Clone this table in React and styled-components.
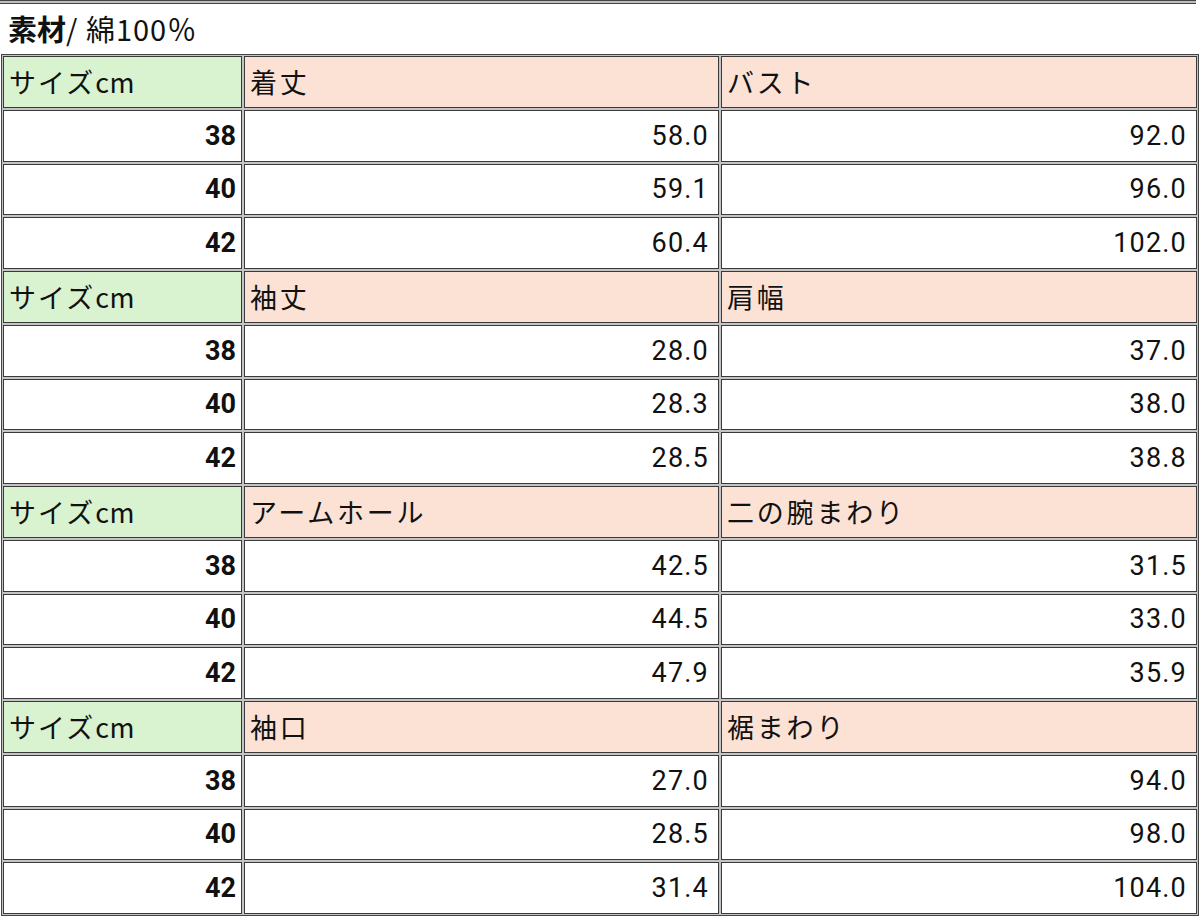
import React from "react";
import styled, { createGlobalStyle } from "styled-components";

const Global = createGlobalStyle`
  html, body { margin: 0; padding: 0; background: #fff; }
  body { font-family: "Noto Sans CJK JP", "Noto Sans", sans-serif; color: #111; }
`;

const Page = styled.div`
  width: 1200px;
  height: 918px;
  overflow: hidden;
`;

const TopRule = styled.div`
  width: 1196px;
  height: 2px;
  border-top: 1px solid #444;
  border-bottom: 1px solid #444;
  background: #bdbdbd;
`;

const Caption = styled.div`
  height: 50px;
  padding-left: 8px;
  font-size: 29px;
  line-height: 48px;
  letter-spacing: 1px;
  color: #111;
  box-sizing: border-box;
  font-family: "Noto Sans CJK JP", sans-serif;
`;

const Strong = styled.span`
  font-weight: 700;
  letter-spacing: 0;
`;

const Table = styled.div`
  margin-left: 1px;
  width: 1198px;
  box-sizing: border-box;
  display: grid;
  grid-template-columns: 239px 475px 476px;
  grid-auto-rows: 51.75px;
  gap: 2px;
  padding: 1px;
  border: 1px solid #444;
  background: #c4c4c4;
`;

const Cell = styled.div`
  box-sizing: border-box;
  border: 1px solid #3a3a3a;
  display: flex;
  align-items: center;
  justify-content: ${(p) => (p.$num ? "flex-end" : "flex-start")};
  padding: ${(p) => (p.$size ? "0 5px 0 6px" : p.$num ? "0 9px 0 6px" : "0 6px 0 5px")};
  background: ${(p) =>
    p.$kind === "size" ? "#d9f2d0" : p.$kind === "label" ? "#fbe2d5" : "#ffffff"};
  font-size: 27px;
  font-weight: ${(p) => (p.$size ? 700 : 400)};
  color: #111;
  white-space: nowrap;
  font-family: ${(p) =>
    p.$num ? '"Roboto", "Noto Sans CJK JP", sans-serif' : '"Noto Sans CJK JP", sans-serif'};
  letter-spacing: ${(p) =>
    p.$size ? "0" : p.$num ? "1.2px" : p.$kind === "label" ? "2.8px" : "2px"};
`;

const Unit = styled.span`
  letter-spacing: 0.5px;
`;

const groups = [
  { a: "着丈", b: "バスト", rows: [["38", "58.0", "92.0"], ["40", "59.1", "96.0"], ["42", "60.4", "102.0"]] },
  { a: "袖丈", b: "肩幅", rows: [["38", "28.0", "37.0"], ["40", "28.3", "38.0"], ["42", "28.5", "38.8"]] },
  { a: "アームホール", b: "二の腕まわり", rows: [["38", "42.5", "31.5"], ["40", "44.5", "33.0"], ["42", "47.9", "35.9"]] },
  { a: "袖口", b: "裾まわり", rows: [["38", "27.0", "94.0"], ["40", "28.5", "98.0"], ["42", "31.4", "104.0"]] },
];

export default function App() {
  return (
    <Page>
      <Global />
      <TopRule />
      <Caption>
        <Strong>素材</Strong>/ 綿100％
      </Caption>
      <Table>
        {groups.map((g, gi) => (
          <React.Fragment key={gi}>
            <Cell $kind="size">
              サイズ<Unit>cm</Unit>
            </Cell>
            <Cell $kind="label">{g.a}</Cell>
            <Cell $kind="label">{g.b}</Cell>
            {g.rows.map((r, ri) => (
              <React.Fragment key={ri}>
                <Cell $num $size>{r[0]}</Cell>
                <Cell $num>{r[1]}</Cell>
                <Cell $num>{r[2]}</Cell>
              </React.Fragment>
            ))}
          </React.Fragment>
        ))}
      </Table>
    </Page>
  );
}
